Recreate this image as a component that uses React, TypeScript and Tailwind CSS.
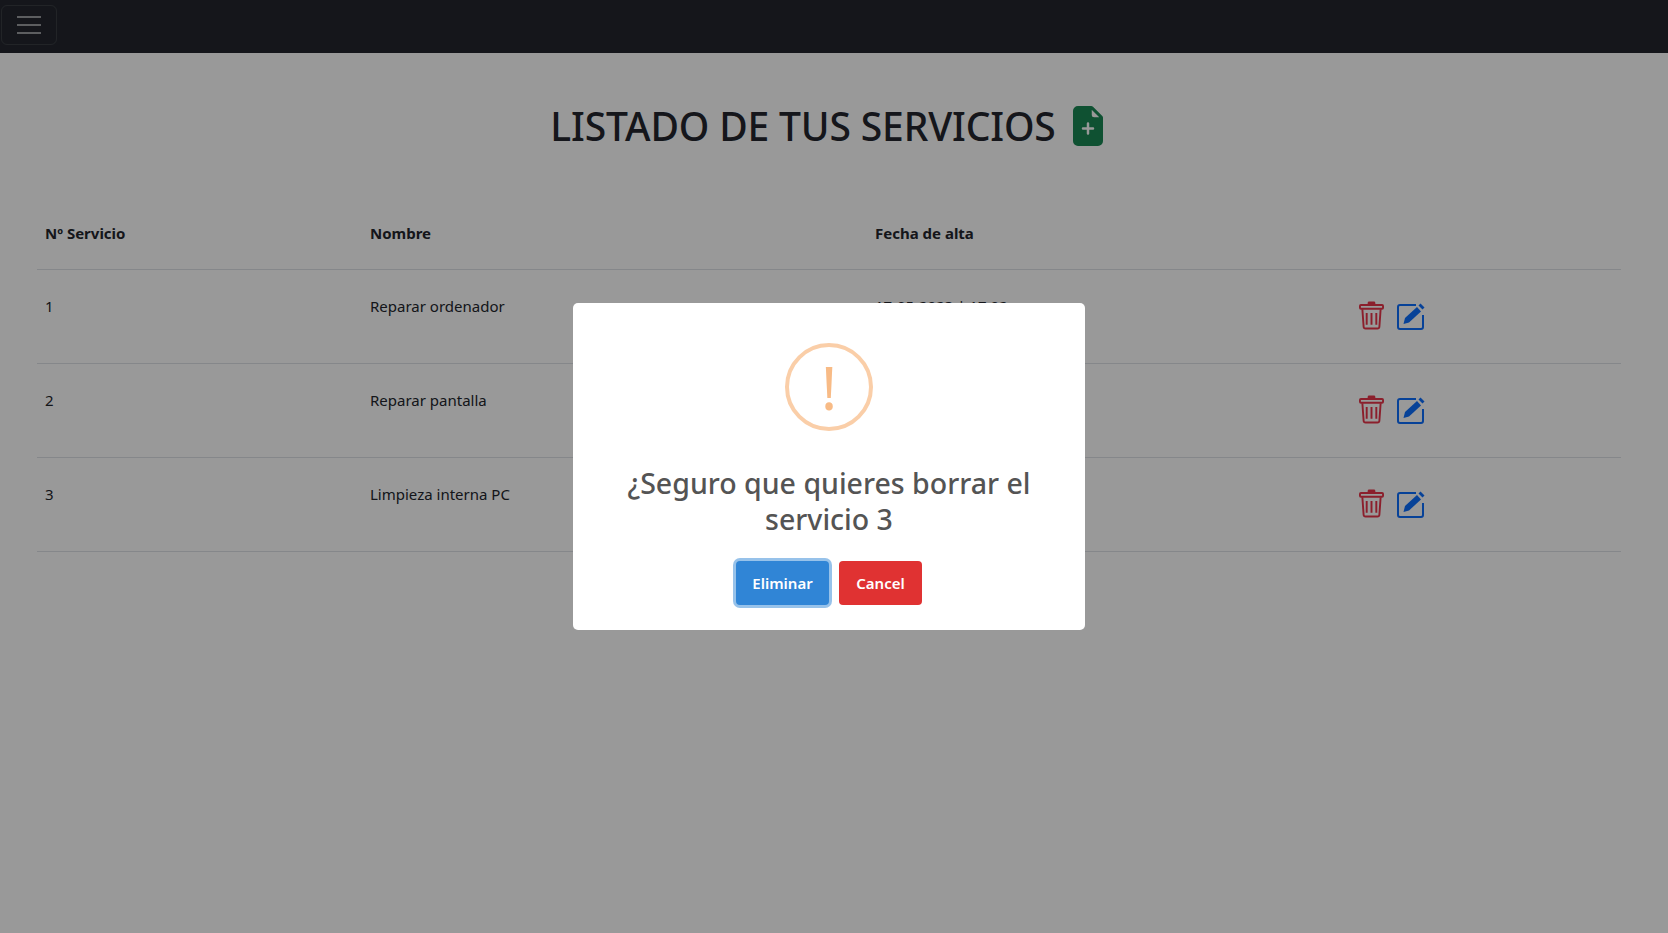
import { BsFileEarmarkPlusFill } from "react-icons/bs";

const SERVICES = [
  { id: 1, name: "Reparar ordenador", date: "17-05-2023 | 17:02" },
  { id: 2, name: "Reparar pantalla", date: "17-05-2023 | 17:04" },
  { id: 3, name: "Limpieza interna PC", date: "17-05-2023 | 17:05" },
];

function TrashIcon() {
  return (
    <svg viewBox="0 0 26 30" className="h-[30px] w-[25px] text-[#e8354a]" fill="none" stroke="currentColor" strokeWidth={2}>
      <rect x="9" y="0" width="8" height="4" rx="1.5" fill="currentColor" stroke="none" />
      <rect x="1" y="3.5" width="24" height="4" rx="1" />
      <path d="M3.5 8l1.3 18.2a2 2 0 002 1.8h12.4a2 2 0 002-1.8L22.500 8" />
      <path d="M8 12v12M13 12v12M18 12v12" />
    </svg>
  );
}

function EditIcon() {
  return (
    <svg viewBox="0 0 28 27" className="h-[27px] w-[28px] text-[#0d6efd]" fill="none" stroke="currentColor" strokeWidth={2}>
      <path d="M19 2H3a2 2 0 00-2 2v20a2 2 0 002 2h21a2 2 0 002-2V12" />
      <path d="M6.500 21L8 15 20 4l4 4.500-12 11z" fill="currentColor" stroke="none" />
      <path d="M21.500 2.500l2-2 4 4-2 2z" fill="currentColor" stroke="none" />
    </svg>
  );
}

function Navbar() {
  return (
    <nav className="h-[53px] bg-[#23262d] pl-[1px] pt-[5px]">
      <button className="flex h-[40px] w-[56px] items-center justify-center rounded-[6px] border border-white/10">
        <svg viewBox="0 0 30 30" className="h-[30px] w-[30px]" fill="none" stroke="rgba(255,255,255,0.55)" strokeWidth={2}>
          <path d="M3 7h24M3 15h24M3 23h24" />
        </svg>
      </button>
    </nav>
  );
}

function ServicesTable() {
  return (
    <table className="mx-[37px] w-[1584px] table-fixed border-collapse text-left text-[15px] text-[#23262d]">
      <thead>
        <tr className="h-[72px] border-b border-[#dee2e6]">
          <th className="w-[325px] px-2 font-bold">Nº Servicio</th>
          <th className="w-[505px] px-2 font-bold">Nombre</th>
          <th className="w-[484px] px-2 font-bold">Fecha de alta</th>
          <th />
        </tr>
      </thead>
      <tbody>
        {SERVICES.map((s) => (
          <tr key={s.id} className="h-[94px] border-b border-[#dee2e6]">
            <td className="px-2 pb-[19px]">{s.id}</td>
            <td className="px-2 pb-[19px]">{s.name}</td>
            <td className="px-2 pb-[19px]">{s.date}</td>
            <td className="px-2">
              <div className="flex items-center gap-[13px]">
                <TrashIcon />
                <EditIcon />
              </div>
            </td>
          </tr>
        ))}
      </tbody>
    </table>
  );
}

function DeleteDialog() {
  return (
    <div className="fixed inset-0 bg-black/40">
      <div className="absolute left-[573px] top-[303px] flex h-[327px] w-[512px] flex-col items-center rounded-[5px] bg-white">
        <div className="mt-[40px] flex h-[88px] w-[88px] items-center justify-center rounded-full border-[4px] border-[#facea8] text-[60px] leading-none text-[#f8bb86]">
          !
        </div>
        <h2 className="mt-[34px] w-[440px] text-center text-[28.500px] leading-[36px] font-medium text-[#545454]">
          ¿Seguro que quieres borrar el servicio 3
        </h2>
        <div className="mt-[24px] flex items-center gap-[10px]">
          <button className="h-[44px] w-[93px] rounded-[4px] bg-[#3085d6] text-[15px] font-semibold text-white ring-[3px] ring-[#3085d6]/50">
            Eliminar
          </button>
          <button className="h-[44px] w-[83px] rounded-[4px] bg-[#e03232] text-[15px] font-semibold text-white">
            Cancel
          </button>
        </div>
      </div>
    </div>
  );
}

export default function App() {
  return (
    <div className="min-h-[933px] bg-white font-['Noto_Sans',sans-serif]">
      <Navbar />
      <main className="w-[1658px]">
        <h1 className="mt-[49px] mb-[47px] flex h-[48px] items-center justify-center gap-[17px] pr-[5px] text-[39px] tracking-[-0.15px] font-medium text-[#23262d]">
          LISTADO DE TUS SERVICIOS
          <BsFileEarmarkPlusFill className="h-[40px] w-[40px] -mx-[5px] text-[#198754]" />
        </h1>
        <ServicesTable />
      </main>
      <DeleteDialog />
    </div>
  );
}
